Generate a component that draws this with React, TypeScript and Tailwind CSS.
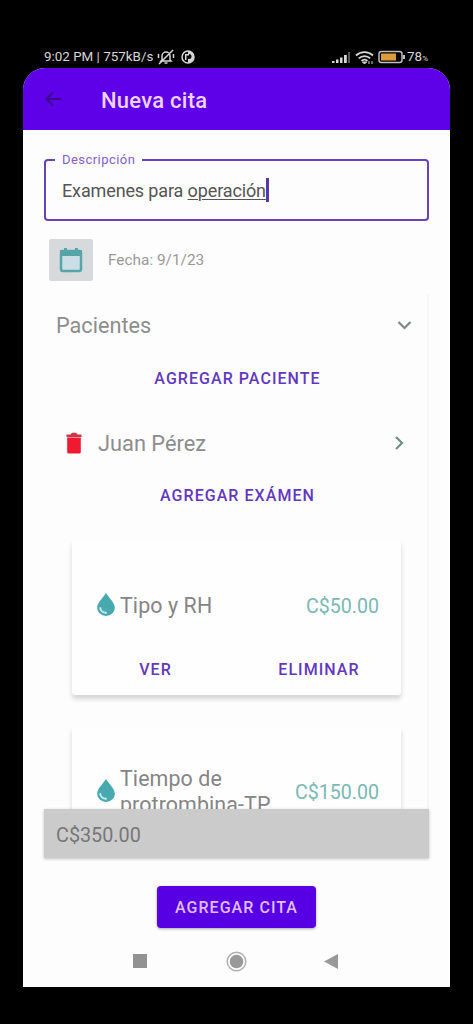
import type { ReactNode } from "react";

function StatusBar() {
  return (
    <div className="flex h-[68px] items-end pr-[45px] pl-[44px] pb-[3px] text-[#d6d6d6]">
      <div className="flex h-4 w-full items-center">
        <span className="text-[13.4px] leading-4 whitespace-nowrap">9:02 PM | 757kB/s</span>
        <svg className="ml-[4px] shrink-0" width="18" height="16" viewBox="0 0 18 16" fill="none" stroke="currentColor" strokeWidth="1.5">
          <path d="M5 11V7a4 4 0 0 1 8 0v4l1 1H4zM7.500 14h3M2 15 16 1M1.500 5v4M16.500 5v4" />
        </svg>
        <svg className="ml-[6px] shrink-0" width="14" height="14" viewBox="0 0 14 14">
          <circle cx="7" cy="7" r="6" fill="#0a0a0a" stroke="currentColor" strokeWidth="1.5" />
          <path d="M7 1a6 6 0 0 1 0 12V9h1a2.500 2.500 0 0 0 0-5H7z" fill="currentColor" />
          <path d="M4 4h4v1.500H5.500V10H4z" fill="currentColor" />
        </svg>
        <div className="grow" />
        <svg className="shrink-0" width="20" height="13" viewBox="0 0 20 13" fill="currentColor">
          <path d="M0 10h2.500v2H0zM4 8.500h2.500V12H4zM8 6.500h2.500V12H8zM12 4h2.800v8H12z" />
          <path d="M16 1h2v11h-2z" fill="#555" />
        </svg>
        <svg className="ml-[3px] shrink-0" width="20" height="15" viewBox="0 0 20 15" fill="none" stroke="currentColor" strokeWidth="1.8">
          <path d="M1 5.500a12.500 12.500 0 0 1 17 0M3.800 8.400a8.300 8.300 0 0 1 11.400 0M6.500 11a4.500 4.500 0 0 1 6 0" />
          <path d="M7.500 12 9.500 14l2-2zM14 14v-3M17 14v-3" fill="currentColor" strokeWidth="1" />
        </svg>
        <svg className="ml-[3px] shrink-0" width="28" height="14" viewBox="0 0 28 14">
          <rect x="1" y="1.500" width="23" height="11" rx="2.500" fill="none" stroke="#bdbdbd" strokeWidth="1.500" />
          <rect x="3" y="3.500" width="15" height="7" fill="#dc9c3c" />
          <path d="M25 5h2v4h-2z" fill="#bdbdbd" />
        </svg>
        <span className="ml-[1px] text-[13.4px] leading-4">78</span>
        <span className="mt-[3px] text-[8px] leading-3">%</span>
      </div>
    </div>
  );
}

function Drop() {
  return (
    <svg className="mt-[-3px] shrink-0" width="20" height="25" viewBox="0 0 20 26">
      <path d="M10 1C7 6 .8 11 .8 16.300a9.200 8.700 0 0 0 18.400 0C19.200 11 13 6 10 1z" fill="#48a9ae" />
      <path d="M4 16.500a6 5.500 0 0 0 6 5" fill="none" stroke="#c4eeee" strokeWidth="2" strokeLinecap="round" />
    </svg>
  );
}

function ExamCard({ name, price, children }: { name: ReactNode; price: string; children?: ReactNode }) {
  return (
    <div className="h-[155px] w-[329px] shrink-0 rounded-[3px] bg-[#fefefe] pt-[41px] shadow-[0_4px_5px_rgba(0,0,0,0.16)]">
      <div className="flex h-[50px] items-center pr-[22px] pl-[24px]">
        <Drop />
        <span className="ml-[4px] w-[160px] text-[21.4px] leading-[26px] tracking-[0.1px] text-[#858585]">{name}</span>
        <span className="ml-auto pt-[2px] text-[19.6px] text-[#7ab8b4]">{price}</span>
      </div>
      {children}
    </div>
  );
}

function TextButton({ children, className }: { children: ReactNode; className: string }) {
  return (
    <button className={`${className} text-center text-[16px] leading-5 font-medium tracking-[1.05px] text-[#6238bd]`}>
      {children}
    </button>
  );
}

export default function App() {
  return (
    <div className="h-[1024px] w-[473px] overflow-hidden bg-black font-[Roboto,sans-serif]">
      <StatusBar />
      <div className="ml-[23px] flex h-[919px] w-[427px] flex-col overflow-hidden rounded-t-[22px] bg-[#fdfdfd]">
        <header className="flex h-[62px] shrink-0 items-center bg-[#5e00e8] pl-[21px]">
          <svg width="19" height="16" viewBox="0 0 19 18" fill="none" stroke="#3a0b91" strokeWidth="2.400">
            <path d="M18 9H2M9 1.500 1.500 9 9 16.500" />
          </svg>
          <h1 className="ml-[38px] pt-[2px] text-[22px] font-medium tracking-[0.25px] text-[#eed2ff]">Nueva cita</h1>
        </header>

        <main className="flex grow flex-col px-[21px]">
          <fieldset className="mt-[21px] h-[70px] rounded-[4px] border-[2.500px] border-2 border-[#6841bd] pl-[9px]">
            <legend className="px-[7px] text-[13px] leading-[17px] tracking-[0.45px] text-[#8660ca]">Descripción</legend>
            <div className="flex h-[44px] items-center pl-[7px] text-[18px] tracking-[-0.13px] text-[#555]">
              <span className="whitespace-pre">Examenes para </span>
              <span className="underline decoration-1 underline-offset-2">operación</span>
              <span className="h-[24px] w-[3px] bg-[#5638a8]" />
            </div>
          </fieldset>

          <div className="mt-[17px] ml-[5px] flex h-[43px] items-center">
            <button className="flex h-[42px] w-[44px] items-center justify-center rounded-[2px] bg-[#d7dadd]">
              <svg width="24" height="26" viewBox="0 0 24 26" fill="none">
                <rect x="2" y="4" width="20" height="20" rx="2" fill="#c9dfe5" stroke="#57a5a8" strokeWidth="2.500" />
                <path d="M1 3h22v6H1zM5 1h3v3H5zM16 1h3v3h-3z" fill="#57a5a8" />
              </svg>
            </button>
            <span className="ml-[15px] pt-[3px] text-[15.4px] text-[#999]">Fecha: 9/1/23</span>
          </div>

          <section className="mt-[14px] flex h-[514px] flex-col items-center overflow-hidden border-r-2 border-[#f5f5f5]">
            <div className="mt-[15px] flex h-[30px] w-full shrink-0 items-center pr-[15px] pl-[12px]">
              <h2 className="pt-[2px] text-[21.7px] text-[#8d8d8d]">Pacientes</h2>
              <svg className="ml-auto" width="15" height="10" viewBox="0 0 15 10" fill="none" stroke="#7d8783" strokeWidth="2.200">
                <path d="m1.500 2 6 6 6-6" />
              </svg>
            </div>
            <TextButton className="mt-[29px] ml-[4px] shrink-0">AGREGAR PACIENTE</TextButton>
            <div className="mt-[39px] flex h-[30px] w-full shrink-0 items-center pr-[23px] pl-[22px]">
              <svg width="16" height="22" viewBox="0 0 16 22">
                <path d="M.5 2.500h4L6 .8h4l1.500 1.700h4V5H.5z" fill="#cf3545" />
                <path d="M1.200 5.500h13.600V20q0 1.500-1.500 1.500H2.700q-1.500 0-1.500-1.500z" fill="#f01932" />
              </svg>
              <span className="ml-[16px] pt-[2px] text-[21.8px] text-[#8d8d8d]">Juan Pérez</span>
              <svg className="ml-auto" width="10" height="14" viewBox="0 0 10 14" fill="none" stroke="#6f9183" strokeWidth="2.200">
                <path d="m2 1 6 6-6 6" />
              </svg>
            </div>
            <TextButton className="mt-[28px] ml-[4px] shrink-0">AGREGAR EXÁMEN</TextButton>
            <div className="mt-[34px] flex w-full flex-col items-center gap-[31px] pl-[2px]">
              <ExamCard name="Tipo y RH" price="C$50.00">
                <div className="flex pt-[29px] pl-[2px]">
                  <TextButton className="w-[163px]">VER</TextButton>
                  <TextButton className="w-[164px]">ELIMINAR</TextButton>
                </div>
              </ExamCard>
              <ExamCard name={<>Tiempo de<br />protrombina-TP</>} price="C$150.00" />
            </div>
          </section>

          <div className="flex h-[49px] shrink-0 items-center bg-[#cbcbcb] pt-[4px] pl-[12px] text-[19.8px] text-[#777] shadow-[0_1px_3px_rgba(0,0,0,0.25)]">
            C$350.00
          </div>

          <button className="mt-[28px] ml-[113px] h-[42px] w-[159px] shrink-0 rounded-[4px] bg-[#5700e3] pt-[1px] text-[16px] font-medium tracking-[1.05px] text-[#e1beff] shadow-[0_1px_3px_rgba(0,0,0,0.35)]">
            AGREGAR CITA
          </button>
        </main>

        <nav className="flex h-[52px] shrink-0 items-center pl-[110px]">
          <svg width="14" height="14" viewBox="0 0 14 14"><path d="M0 0h14v14H0z" fill="#929292" /></svg>
          <svg className="ml-[79px]" width="21" height="21" viewBox="0 0 21 21">
            <circle cx="10.500" cy="10.500" r="9.300" fill="none" stroke="#b0b0b0" strokeWidth="1.500" />
            <circle cx="10.500" cy="10.500" r="6.800" fill="#999" />
          </svg>
          <svg className="ml-[77px]" width="14" height="15" viewBox="0 0 14 15"><path d="M14 0v15L0 7.500z" fill="#999" /></svg>
        </nav>
      </div>
    </div>
  );
}
